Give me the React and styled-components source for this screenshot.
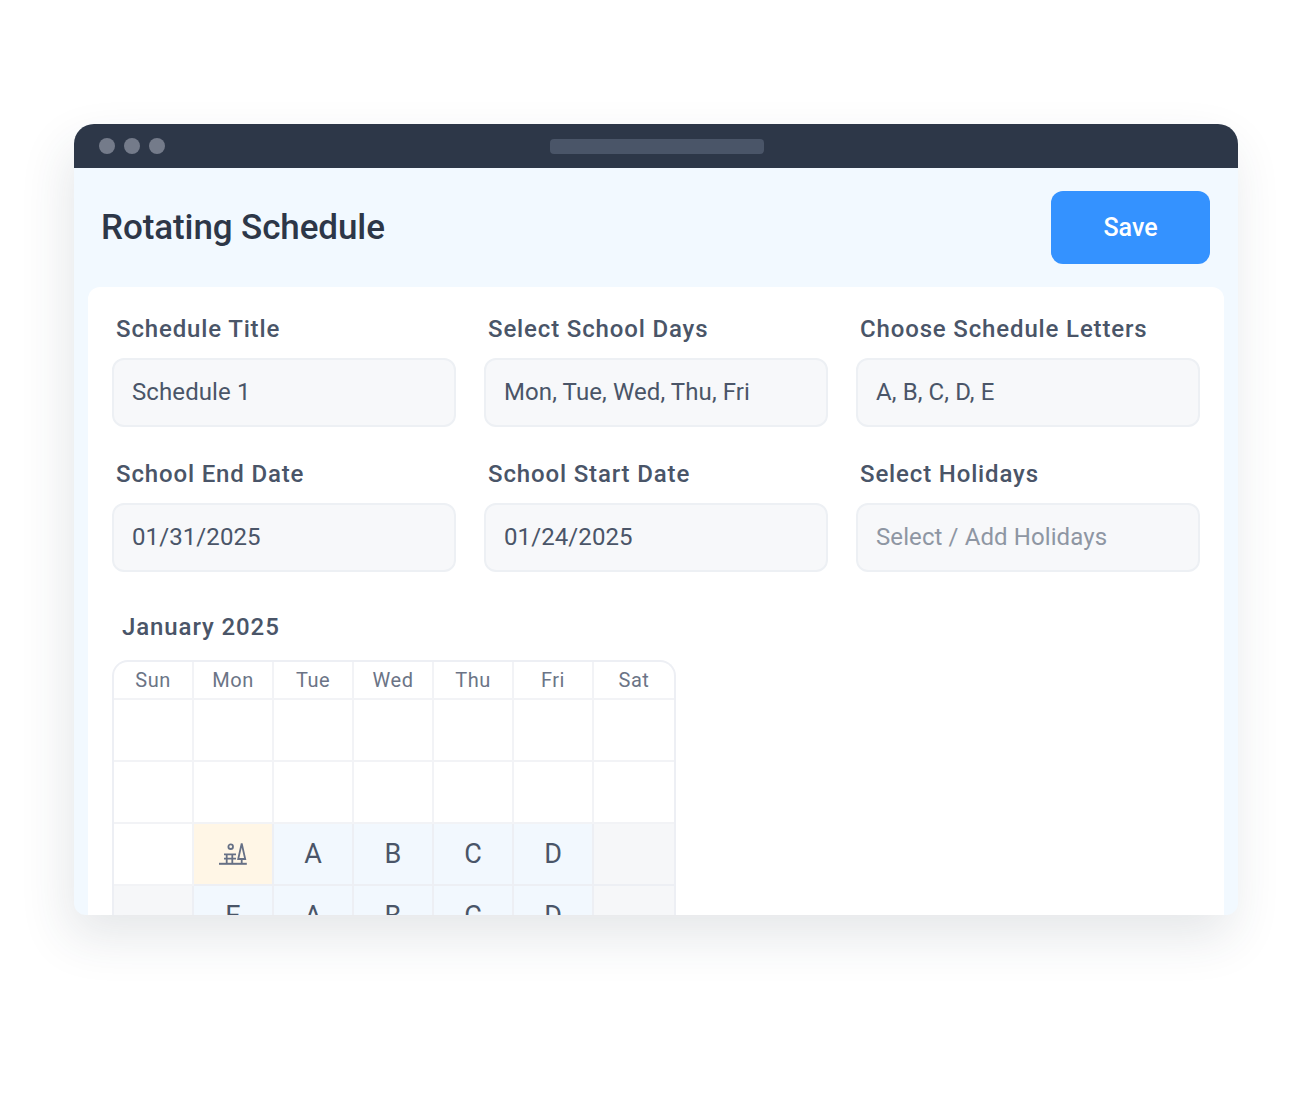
import React from 'react';
import styled, { createGlobalStyle } from 'styled-components';

const GlobalStyle = createGlobalStyle`
  html, body {
    margin: 0;
    padding: 0;
    background: #fff;
    font-family: Roboto, "Liberation Sans", sans-serif;
  }
`;

const Page = styled.div`
  width: 1308px;
  height: 1106px;
  padding: 124px 70px 0 74px;
  box-sizing: border-box;
  overflow: hidden;
`;

const Window = styled.div`
  width: 1164px;
  height: 791px;
  display: flex;
  flex-direction: column;
  background: #f2f9ff;
  border-radius: 20px 20px 12px 12px;
  overflow: hidden;
  box-shadow: -6px 22px 50px rgba(45, 55, 72, 0.12);
`;

const TitleBar = styled.div`
  height: 44px;
  flex: none;
  display: grid;
  grid-template-columns: 1fr auto 1fr;
  align-items: center;
  padding: 0 24.5px;
  background: #2d3748;
`;

const Dots = styled.div`
  display: flex;
  gap: 9px;
`;

const Dot = styled.span`
  width: 16px;
  height: 16px;
  border-radius: 50%;
  background: #747b8a;
`;

const AddressBar = styled.div`
  width: 214px;
  height: 15px;
  margin: 1px 0 0 1px;
  border-radius: 4px;
  background: #4a5568;
`;

const Header = styled.div`
  height: 119px;
  flex: none;
  display: flex;
  align-items: center;
  justify-content: space-between;
  padding: 0 28px 0 27px;
  box-sizing: border-box;
`;

const Title = styled.h1`
  margin: 0;
  font-size: 35px;
  font-weight: 500;
  letter-spacing: -0.1px;
  color: #2d3748;
`;

const SaveButton = styled.button`
  width: 159px;
  height: 73px;
  border: 0;
  border-radius: 12px;
  background: #3492ff;
  color: #fff;
  font-family: inherit;
  font-size: 25px;
  font-weight: 500;
`;

const Card = styled.div`
  flex: 1;
  margin: 0 14px;
  padding: 24px 24px 0;
  background: #fff;
  border-radius: 12px 12px 0 0;
`;

const FormGrid = styled.div`
  display: grid;
  grid-template-columns: repeat(3, 344px);
  column-gap: 28px;
  row-gap: 29px;
`;

const Field = styled.div`
  display: flex;
  flex-direction: column;
  gap: 11px;
`;

const Label = styled.label`
  height: 36px;
  line-height: 36px;
  padding-left: 4px;
  font-size: 24px;
  font-weight: 500;
  letter-spacing: 0.85px;
  color: #4a5568;
`;

const Input = styled.div`
  height: 69px;
  display: flex;
  align-items: center;
  padding: 0 18px 2px;
  box-sizing: border-box;
  background: #f7f8fa;
  border: 2px solid #edf0f4;
  border-radius: 12px;
  font-size: 24px;
  letter-spacing: 0.1px;
  color: ${({ $placeholder }) => ($placeholder ? '#8e96a3' : '#4a5568')};
`;

const MonthTitle = styled.h2`
  margin: 37px 0 15px;
  padding-left: 10px;
  line-height: 36px;
  font-size: 24px;
  font-weight: 500;
  letter-spacing: 0.9px;
  color: #4a5568;
`;

const Calendar = styled.div`
  width: 564px;
  display: grid;
  grid-template-columns: repeat(7, 1fr);
  grid-template-rows: 38px;
  grid-auto-rows: 62px;
  box-sizing: border-box;
  border-top: 2px solid #edeff4;
  border-left: 2px solid #edeff4;
  border-right: 2px solid #edeff4;
  border-radius: 16px 16px 0 0;
  overflow: hidden;
`;

const DayName = styled.div`
  display: flex;
  align-items: center;
  justify-content: center;
  font-size: 20px;
  letter-spacing: 0.5px;
  color: #6b7486;
  border-right: 2px solid #f2f3f6;
  border-bottom: 2px solid #f2f3f6;
  box-sizing: border-box;

  &:nth-child(7) {
    border-right: 0;
  }
`;

const cellColors = {
  empty: '#fff',
  off: '#f6f7f9',
  letter: '#f2f8fe',
  holiday: '#fff6e6',
};

const Cell = styled.div`
  display: flex;
  align-items: center;
  justify-content: center;
  box-sizing: border-box;
  font-size: 27px;
  color: #4a5568;
  background: ${({ $kind }) => cellColors[$kind]};
  border-right: 2px solid ${({ $kind }) => ($kind === 'empty' ? '#f2f3f6' : '#edeff4')};
  border-bottom: 2px solid ${({ $kind }) => ($kind === 'empty' ? '#f2f3f6' : '#edeff4')};

  &:nth-child(7n) {
    border-right: 0;
  }
`;

const HolidayIcon = () => (
  <svg width="30" height="24" viewBox="0 0 30 24" fill="none" stroke="#667085" strokeWidth="1.8">
    <circle cx="12.7" cy="4.7" r="2.3" />
    <path d="M1 21.8h27.8" strokeWidth="2" />
    <path d="M6 12.3h12M6 16.7h12M8.7 12.3v9.5M14.3 12.3v9.5" />
    <path d="M23.7 1.5L20.2 17h7z" />
    <path d="M23.7 17v4.8" />
  </svg>
);

const fields = [
  { label: 'Schedule Title', value: 'Schedule 1' },
  { label: 'Select School Days', value: 'Mon, Tue, Wed, Thu, Fri' },
  { label: 'Choose Schedule Letters', value: 'A, B, C, D, E' },
  { label: 'School End Date', value: '01/31/2025' },
  { label: 'School Start Date', value: '01/24/2025' },
  { label: 'Select Holidays', value: 'Select / Add Holidays', placeholder: true },
];

const days = ['Sun', 'Mon', 'Tue', 'Wed', 'Thu', 'Fri', 'Sat'];

const cells = [
  ...Array(14).fill({ kind: 'empty' }),
  { kind: 'empty' },
  { kind: 'holiday', icon: true },
  { kind: 'letter', text: 'A' },
  { kind: 'letter', text: 'B' },
  { kind: 'letter', text: 'C' },
  { kind: 'letter', text: 'D' },
  { kind: 'off' },
  { kind: 'off' },
  { kind: 'letter', text: 'E' },
  { kind: 'letter', text: 'A' },
  { kind: 'letter', text: 'B' },
  { kind: 'letter', text: 'C' },
  { kind: 'letter', text: 'D' },
  { kind: 'off' },
];

const App = () => {
  return (
    <Page>
      <GlobalStyle />
      <Window>
        <TitleBar>
          <Dots>
            <Dot />
            <Dot />
            <Dot />
          </Dots>
          <AddressBar />
        </TitleBar>
        <Header>
          <Title>Rotating Schedule</Title>
          <SaveButton>Save</SaveButton>
        </Header>
        <Card>
          <FormGrid>
            {fields.map((f) => (
              <Field key={f.label}>
                <Label>{f.label}</Label>
                <Input $placeholder={f.placeholder}>{f.value}</Input>
              </Field>
            ))}
          </FormGrid>
          <MonthTitle>January 2025</MonthTitle>
          <Calendar>
            {days.map((d) => (
              <DayName key={d}>{d}</DayName>
            ))}
            {cells.map((c, i) => (
              <Cell key={i} $kind={c.kind}>
                {c.icon ? <HolidayIcon /> : c.text}
              </Cell>
            ))}
          </Calendar>
        </Card>
      </Window>
    </Page>
  );
};

export default App;
